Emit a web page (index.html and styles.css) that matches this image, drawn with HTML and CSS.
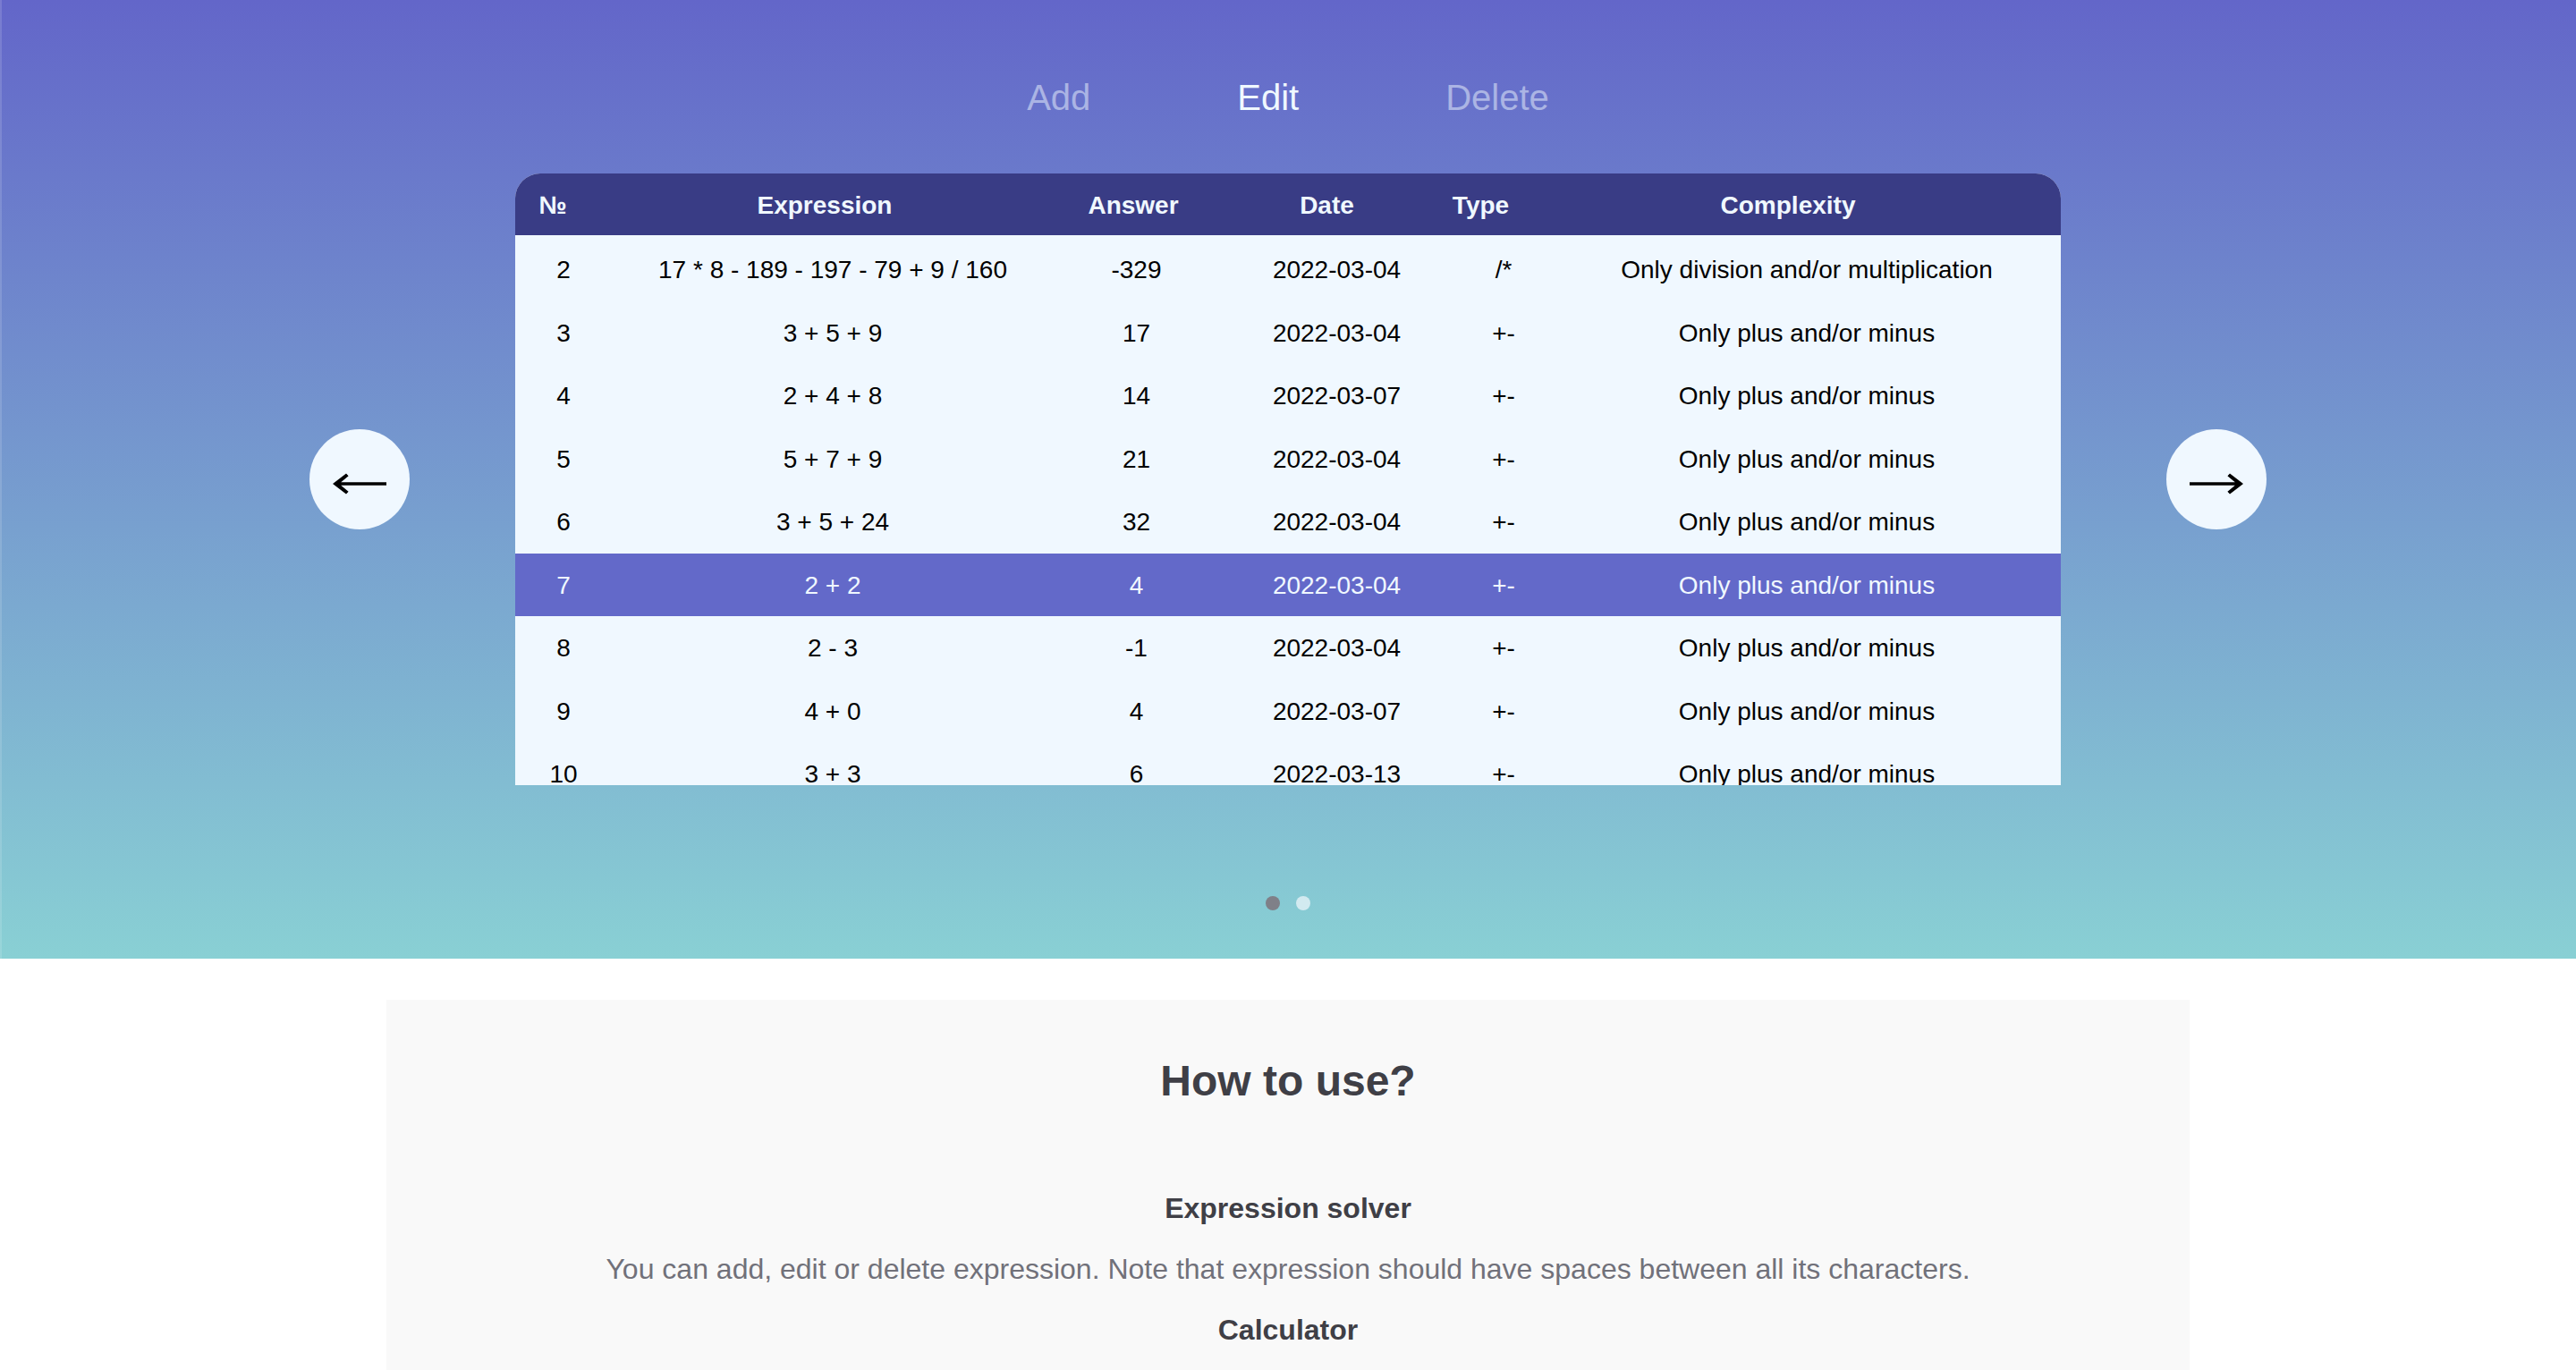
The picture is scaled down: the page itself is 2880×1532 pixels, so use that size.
FILE: index.html
```html
<!DOCTYPE html>
<html lang="en">
<head>
<meta charset="utf-8">
<title>Expression solver</title>
<link rel="stylesheet" href="styles.css">
</head>
<body>
<section class="hero">
  <nav class="tabs">
    <a class="tab">Add</a>
    <a class="tab tab-active">Edit</a>
    <a class="tab">Delete</a>
  </nav>
  <div class="slider">
    <button class="arrow" aria-label="Previous">
      <svg class="arrow-icon" width="60" height="24" viewBox="0 0 60 24"><path d="M0 12 L15 0.6 L17.6 3.2 L9.2 10.3 H60 V13.7 H9.2 L17.6 20.8 L15 23.4 Z" fill="#000"/></svg>
    </button>
    <div class="table-card">
      <div class="thead">
        <div>№</div>
        <div>Expression</div>
        <div>Answer</div>
        <div>Date</div>
        <div>Type</div>
        <div>Complexity</div>
      </div>
      <div class="tbody">
        <div class="row"><div>2</div><div>17 * 8 - 189 - 197 - 79 + 9 / 160</div><div>-329</div><div>2022-03-04</div><div>/*</div><div>Only division and/or multiplication</div></div>
        <div class="row"><div>3</div><div>3 + 5 + 9</div><div>17</div><div>2022-03-04</div><div>+-</div><div>Only plus and/or minus</div></div>
        <div class="row"><div>4</div><div>2 + 4 + 8</div><div>14</div><div>2022-03-07</div><div>+-</div><div>Only plus and/or minus</div></div>
        <div class="row"><div>5</div><div>5 + 7 + 9</div><div>21</div><div>2022-03-04</div><div>+-</div><div>Only plus and/or minus</div></div>
        <div class="row"><div>6</div><div>3 + 5 + 24</div><div>32</div><div>2022-03-04</div><div>+-</div><div>Only plus and/or minus</div></div>
        <div class="row row-selected"><div>7</div><div>2 + 2</div><div>4</div><div>2022-03-04</div><div>+-</div><div>Only plus and/or minus</div></div>
        <div class="row"><div>8</div><div>2 - 3</div><div>-1</div><div>2022-03-04</div><div>+-</div><div>Only plus and/or minus</div></div>
        <div class="row"><div>9</div><div>4 + 0</div><div>4</div><div>2022-03-07</div><div>+-</div><div>Only plus and/or minus</div></div>
        <div class="row"><div>10</div><div>3 + 3</div><div>6</div><div>2022-03-13</div><div>+-</div><div>Only plus and/or minus</div></div>
      </div>
    </div>
    <button class="arrow" aria-label="Next">
      <svg class="arrow-icon" width="60" height="24" viewBox="0 0 60 24"><path d="M60 12 L45 0.6 L42.4 3.2 L50.8 10.3 H0 V13.7 H50.8 L42.4 20.8 L45 23.4 Z" fill="#000"/></svg>
    </button>
  </div>
  <div class="dots"><span class="dot dot-active"></span><span class="dot"></span></div>
</section>
<section class="help">
  <div class="help-card">
    <h2 class="help-title">How to use?</h2>
    <h3 class="help-sub">Expression solver</h3>
    <p class="help-text">You can add, edit or delete expression. Note that expression should have spaces between all its characters.</p>
    <h3 class="help-sub">Calculator</h3>
  </div>
</section>
</body>
</html>
```
FILE: styles.css
```css
* { box-sizing: border-box; }
html, body { margin: 0; padding: 0; }
body {
  font-family: "Liberation Sans", Arial, Helvetica, sans-serif;
  background: #ffffff;
  color: #000000;
}
.hero {
  height: 1072px;
  background: linear-gradient(180deg, #6366c9 0%, #89d0d4 100%);
  box-shadow: inset 2px 0 0 rgba(255, 255, 255, 0.14);
  padding-top: 85px;
  display: flex;
  flex-direction: column;
  align-items: center;
}
.tabs {
  display: flex;
  gap: 164px;
  height: 46px;
  padding-top: 2px;
}
.tab {
  font-size: 40px;
  line-height: 44px;
  color: rgba(240, 248, 255, 0.5);
  text-decoration: none;
  cursor: pointer;
}
.tab-active { color: #f0f8ff; }
.slider {
  margin-top: 63px;
  display: flex;
  align-items: center;
  gap: 118px;
}
.arrow {
  width: 112px;
  height: 112px;
  border-radius: 50%;
  background: #f0f8ff;
  border: 0;
  padding: 10px 0 0 0;
  display: flex;
  align-items: center;
  justify-content: center;
  cursor: pointer;
}
.arrow-icon { display: block; }
.table-card {
  width: 1728px;
  height: 684px;
  border-radius: 28px 28px 0 0;
  overflow: hidden;
  background: #f0f8ff;
}
.thead {
  display: grid;
  grid-template-columns: 84px 524px 166px 267px 77px 1fr;
  height: 69px;
  padding-top: 3px;
  background: #393c85;
  color: #f0f8ff;
  font-weight: bold;
  font-size: 28px;
  align-items: center;
  text-align: center;
}
.tbody {
  height: 615px;
  overflow: hidden;
  padding-top: 3px;
}
.row {
  display: grid;
  grid-template-columns: 108px 494px 185px 263px 110px 1fr;
  height: 70.5px;
  padding-top: 2px;
  align-items: center;
  text-align: center;
  font-size: 28px;
  white-space: nowrap;
}
.row-selected {
  background: #6369c9;
  color: #f0f8ff;
}
.dots {
  margin-top: 124px;
  display: flex;
  gap: 18px;
}
.dot {
  width: 16px;
  height: 16px;
  border-radius: 50%;
  background: #d2eaf0;
}
.dot-active { background: #7f8088; }
.help {
  padding-top: 46px;
  display: flex;
  justify-content: center;
}
.help-card {
  width: 2016px;
  background: #f9f9f9;
  padding: 63px 40px 120px;
  text-align: center;
}
.help-title {
  margin: 0 0 96px;
  font-size: 48px;
  line-height: 56px;
  font-weight: bold;
  color: #3f3f46;
}
.help-sub {
  margin: 0 0 32px;
  font-size: 32px;
  line-height: 36px;
  font-weight: bold;
  color: #3f3f46;
}
.help-text {
  margin: 0 0 32px;
  font-size: 32px;
  line-height: 36px;
  color: #71717a;
}
```
